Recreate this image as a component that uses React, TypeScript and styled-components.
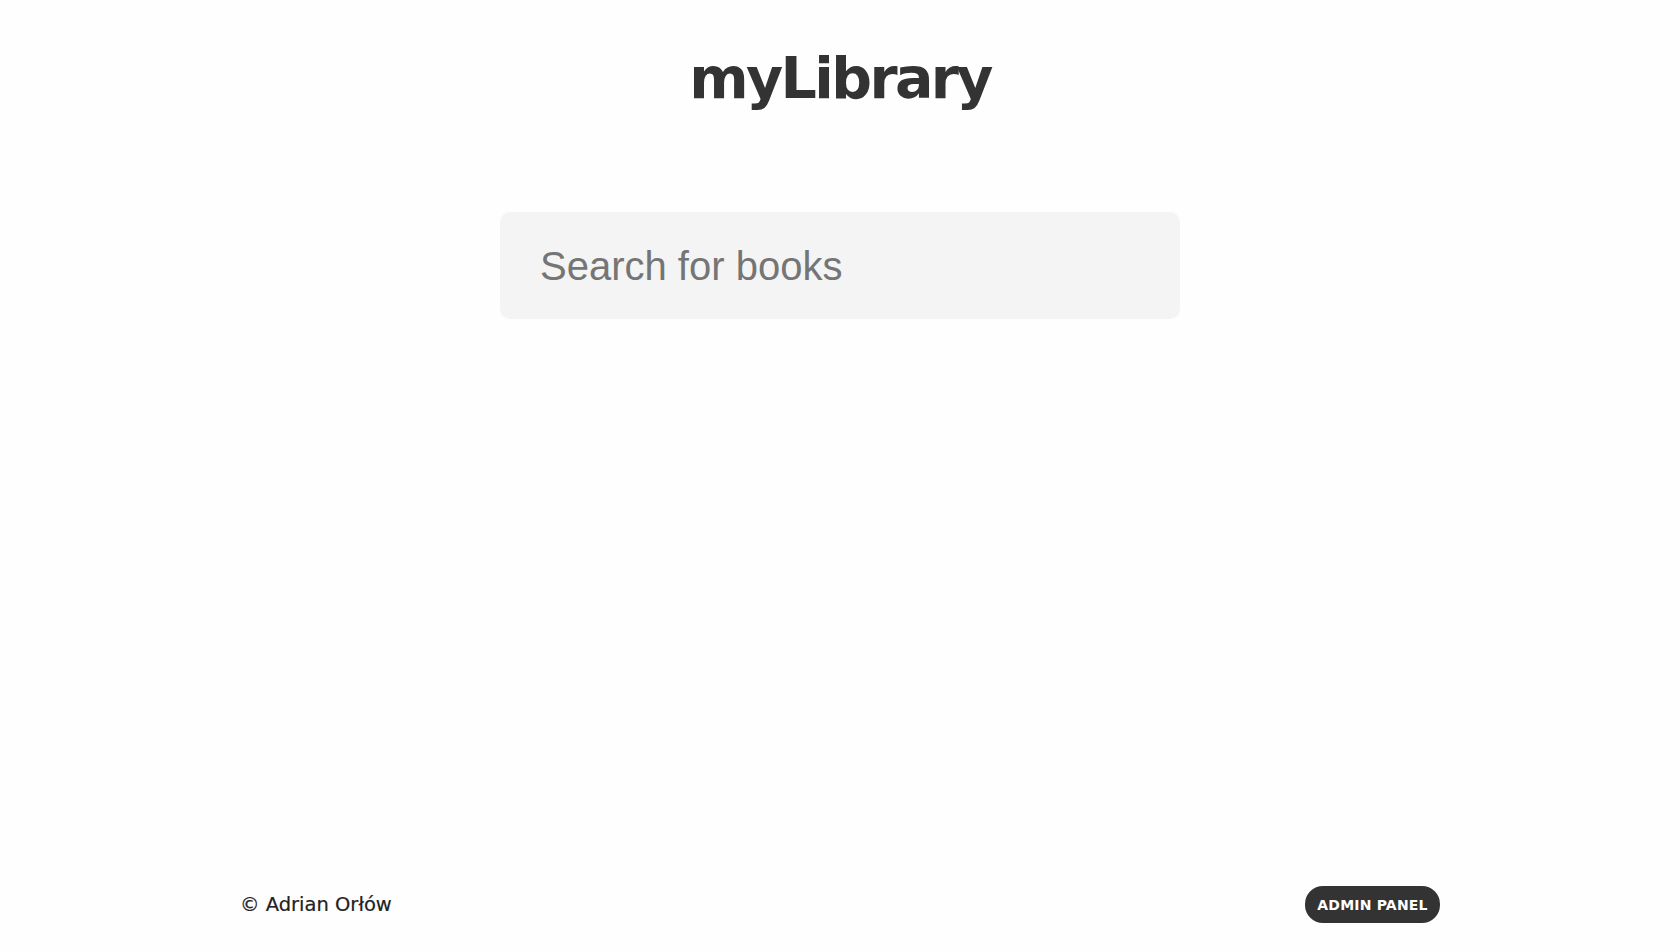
import React from "react";
import styled, { createGlobalStyle } from "styled-components";

const Global = createGlobalStyle`
  html, body { margin: 0; padding: 0; background: #fefefe; }
  * { box-sizing: border-box; }
  body { font-family: "DejaVu Sans", "Noto Sans", sans-serif; color: #333; }
`;

const Page = styled.div`
  min-height: 100vh;
  display: flex;
  flex-direction: column;
  align-items: center;
`;

const Title = styled.h1`
  margin: 38px 0 0;
  font-family: "DejaVu Sans", sans-serif;
  font-weight: 700;
  font-size: 57px;
  line-height: 80px;
  color: #333;
  letter-spacing: -2.6px;
`;

const SearchInput = styled.input`
  margin-top: 94px;
  width: 680px;
  height: 107px;
  border: none;
  outline: none;
  border-radius: 10px;
  background: #f4f4f4;
  padding: 2px 40px 0;
  font-family: "Liberation Sans", Arial, sans-serif;
  font-size: 40px;
  color: #333;
  &::placeholder { color: #757575; }
`;

const Footer = styled.footer`
  margin-top: auto;
  width: 1200px;
  display: flex;
  align-items: center;
  justify-content: space-between;
  padding-bottom: 28px;
`;

const Copy = styled.span`
  font-family: "DejaVu Sans", sans-serif;
  font-weight: 500;
  font-size: 19.5px;
  color: #222;
  -webkit-text-stroke: 0.2px #222;
`;

const AdminButton = styled.button`
  height: 37px;
  width: 135px;
  border: none;
  border-radius: 18px;
  background: #333;
  color: #fff;
  font-family: "DejaVu Sans", sans-serif;
  font-weight: 700;
  font-size: 14px;
  letter-spacing: 0.2px;
  padding: 0;
  cursor: pointer;
`;

export default function App() {
  return (
    <>
      <Global />
      <Page>
        <Title>myLibrary</Title>
        <SearchInput placeholder="Search for books" />
        <Footer>
          <Copy>© Adrian Orłów</Copy>
          <AdminButton>ADMIN PANEL</AdminButton>
        </Footer>
      </Page>
    </>
  );
}
